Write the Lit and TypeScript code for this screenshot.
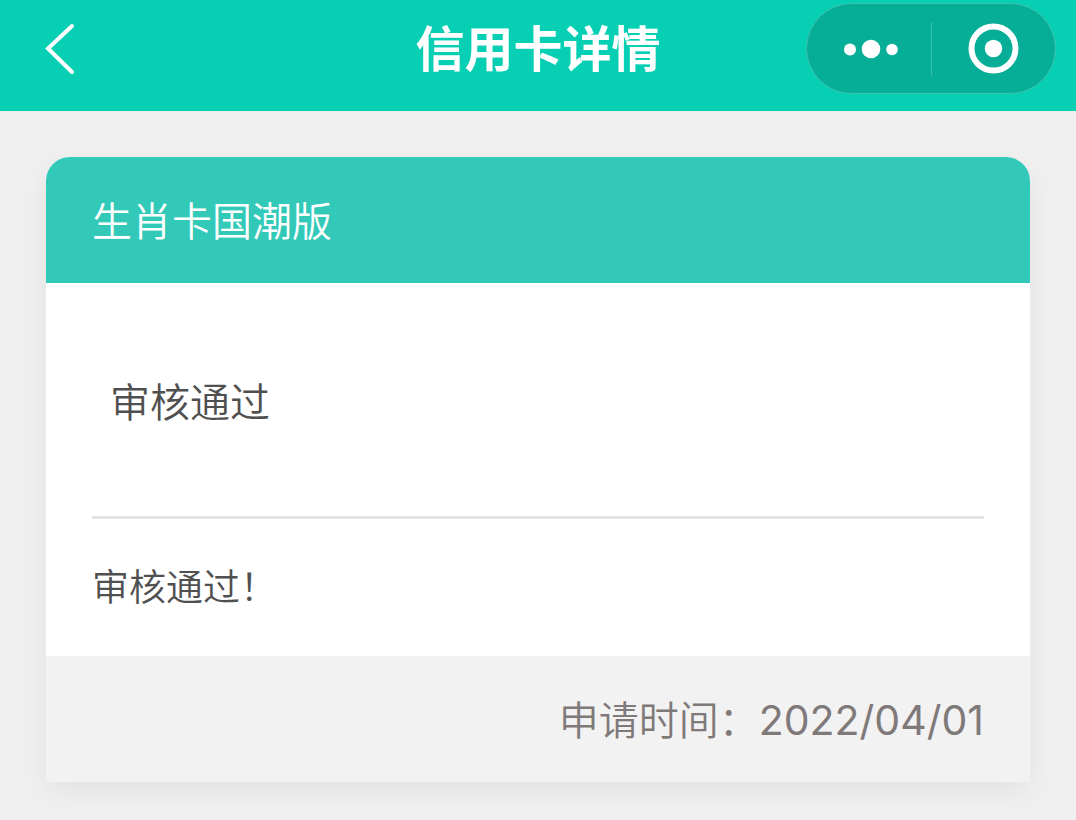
import { LitElement, html, css } from "lit";
import { customElement, property } from "lit/decorators.js";

@customElement("nav-header")
class NavHeader extends LitElement {
  @property() heading = "";

  static styles = css`
    :host { display: block; background: #07cfb3; color: #fff; }
    .bar {
      display: grid;
      grid-template-columns: 1fr auto 1fr;
      align-items: center;
      padding: 3px 20px 17px;
    }
    button {
      display: flex; align-items: center; justify-content: center;
      padding: 0; border: 0; background: none; color: inherit; cursor: pointer;
    }
    svg { display: block; }
    .back { justify-self: start; padding-left: 24px; }
    h1 { margin: 0; padding-bottom: 6px; font-size: 49px; line-height: 72px; font-weight: 700; }
    .capsule {
      justify-self: end;
      display: grid; grid-template-columns: 1fr 1px 1fr; align-items: center;
      box-sizing: border-box;
      width: 250px; height: 91px;
      border: 1px solid #3bc4b1; border-radius: 46px;
      background: #07ae97;
    }
    .capsule button { height: 100%; }
    .capsule .more { padding-left: 4px; }
    .split { height: 54px; background: #3bbfac; }
  `;

  render() {
    return html`
      <header class="bar">
        <button class="back" aria-label="返回">
          <svg width="32" height="54" viewBox="0 0 32 54" fill="none" stroke="currentColor" stroke-width="4" stroke-linecap="round">
            <path d="M28 4 4 26.500l24 23.500" />
          </svg>
        </button>
        <h1>${this.heading}</h1>
        <div class="capsule">
          <button class="more" aria-label="更多">
            <svg width="56" height="20" viewBox="0 0 56 20" fill="currentColor">
              <circle cx="7" cy="10.500" r="6" /><circle cx="28" cy="10" r="9.300" /><circle cx="49" cy="10.500" r="5.800" />
            </svg>
          </button>
          <span class="split"></span>
          <button aria-label="关闭">
            <svg width="52" height="52" viewBox="0 0 52 52" fill="none">
              <circle cx="26.500" cy="25.500" r="22" stroke="currentColor" stroke-width="6" />
              <circle cx="26.500" cy="25.500" r="8.700" fill="currentColor" />
            </svg>
          </button>
        </div>
      </header>
    `;
  }
}

@customElement("app-root")
class AppRoot extends LitElement {
  static styles = css`
    :host {
      display: block; min-height: 100vh; background: #f0f0f0;
      font-family: "Noto Sans CJK SC", sans-serif;
    }
    main { padding: 46px 46px 37px; }
    .card {
      border-radius: 24px 24px 0 0;
      background: #fff;
      box-shadow: 0 10px 30px rgba(0, 0, 0, 0.06);
      color: #505050;
      font-weight: 350;
    }
    h2 {
      margin: 0; padding: 32px 46px 34px;
      border-radius: 24px 24px 0 0;
      background: #33c9b8; color: #fff;
      font-size: 40px; line-height: 60px; font-weight: 350;
    }
    .body { padding: 0 46px; }
    .status {
      margin: 0; padding: 87px 18px 86px;
      border-bottom: 3px solid #e3e3e3;
      font-size: 40px; line-height: 60px;
    }
    .note { margin: 0; padding: 36px 0 41px; font-size: 37px; line-height: 60px; }
    footer {
      display: flex; justify-content: flex-end; align-items: baseline;
      padding: 32px 46px 34px;
      background: #f2f2f2; color: #7f7979;
      font-size: 40px; line-height: 60px;
    }
    time { font-family: Inter, sans-serif; font-size: 41px; font-weight: 400; line-height: 48px; }
  `;

  render() {
    return html`
      <nav-header heading="信用卡详情"></nav-header>
      <main>
        <article class="card">
          <h2>生肖卡国潮版</h2>
          <div class="body">
            <p class="status">审核通过</p>
            <p class="note">审核通过！</p>
          </div>
          <footer><span>申请时间：</span><time datetime="2022-04-01">2022/04/01</time></footer>
        </article>
      </main>
    `;
  }
}
